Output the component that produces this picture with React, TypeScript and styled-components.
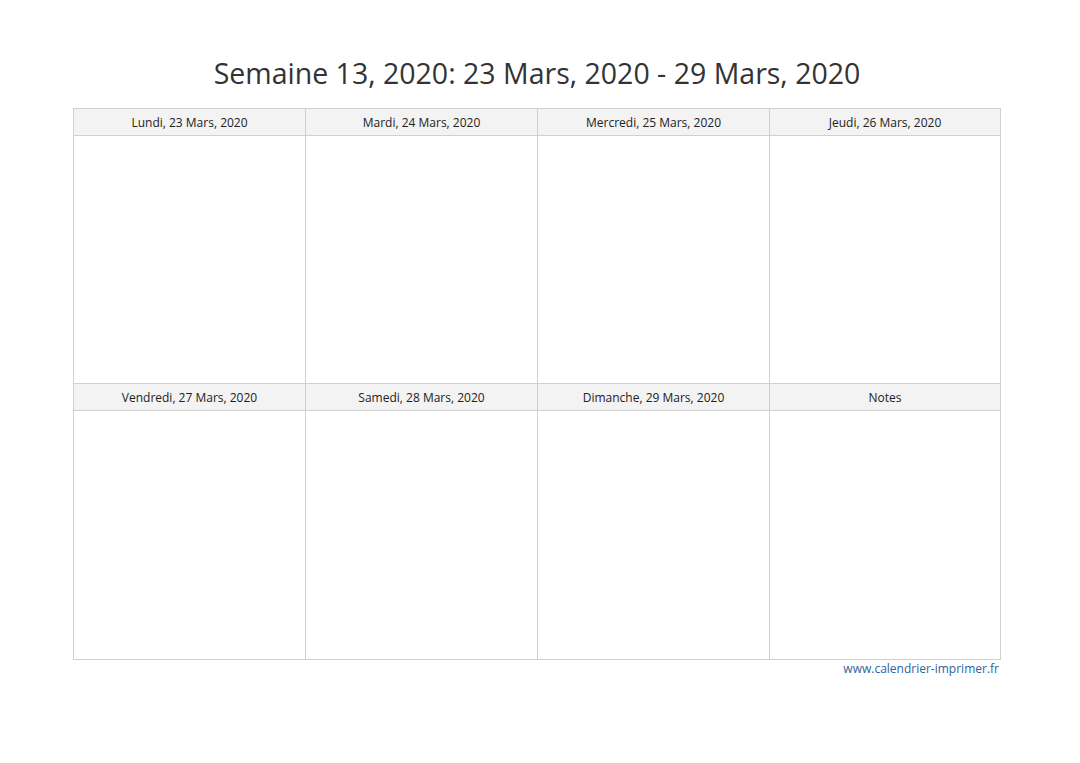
import React from "react";
import styled, { createGlobalStyle } from "styled-components";

const Global = createGlobalStyle`
  html, body { margin: 0; padding: 0; background: #ffffff; }
  body { font-family: "Open Sans", "Noto Sans", sans-serif; }
`;

const Page = styled.div`
  width: 1080px;
  height: 763px;
  box-sizing: border-box;
  padding-top: 52px;
  padding-left: 73px;
  display: flex;
  flex-direction: column;
  align-items: flex-start;
`;

const Title = styled.h1`
  margin: 0;
  width: 928px;
  text-align: center;
  font-family: "Open Sans", sans-serif;
  font-weight: 400;
  font-size: 28.5px;
  line-height: 42px;
  color: #333333;
  height: 56px;
`;

const Grid = styled.div`
  display: grid;
  grid-template-columns: 231px 231px 231px 230px;
  grid-template-rows: 26px 247px 26px 248px;
  gap: 1px;
  padding: 1px;
  background: #d0d0d0;
  width: 928px;
  box-sizing: border-box;
`;

const HeadCell = styled.div`
  background: #f3f3f3;
  display: flex;
  align-items: center;
  justify-content: center;
  font-size: 12px;
  color: #222222;
`;

const BodyCell = styled.div`
  background: #ffffff;
`;

const Footer = styled.div`
  width: 928px;
  text-align: right;
  box-sizing: border-box;
  padding-right: 2px;
  font-size: 12px;
  line-height: 17px;
  color: #2a64a0;
`;

const row1 = ["Lundi, 23 Mars, 2020", "Mardi, 24 Mars, 2020", "Mercredi, 25 Mars, 2020", "Jeudi, 26 Mars, 2020"];
const row2 = ["Vendredi, 27 Mars, 2020", "Samedi, 28 Mars, 2020", "Dimanche, 29 Mars, 2020", "Notes"];

export default function App() {
  return (
    <>
      <Global />
      <Page>
        <Title>Semaine 13, 2020: 23 Mars, 2020 - 29 Mars, 2020</Title>
        <Grid>
          {row1.map((t) => (
            <HeadCell key={t}>{t}</HeadCell>
          ))}
          {row1.map((t) => (
            <BodyCell key={t + "b"} />
          ))}
          {row2.map((t) => (
            <HeadCell key={t}>{t}</HeadCell>
          ))}
          {row2.map((t) => (
            <BodyCell key={t + "b"} />
          ))}
        </Grid>
        <Footer>www.calendrier-imprimer.fr</Footer>
      </Page>
    </>
  );
}
